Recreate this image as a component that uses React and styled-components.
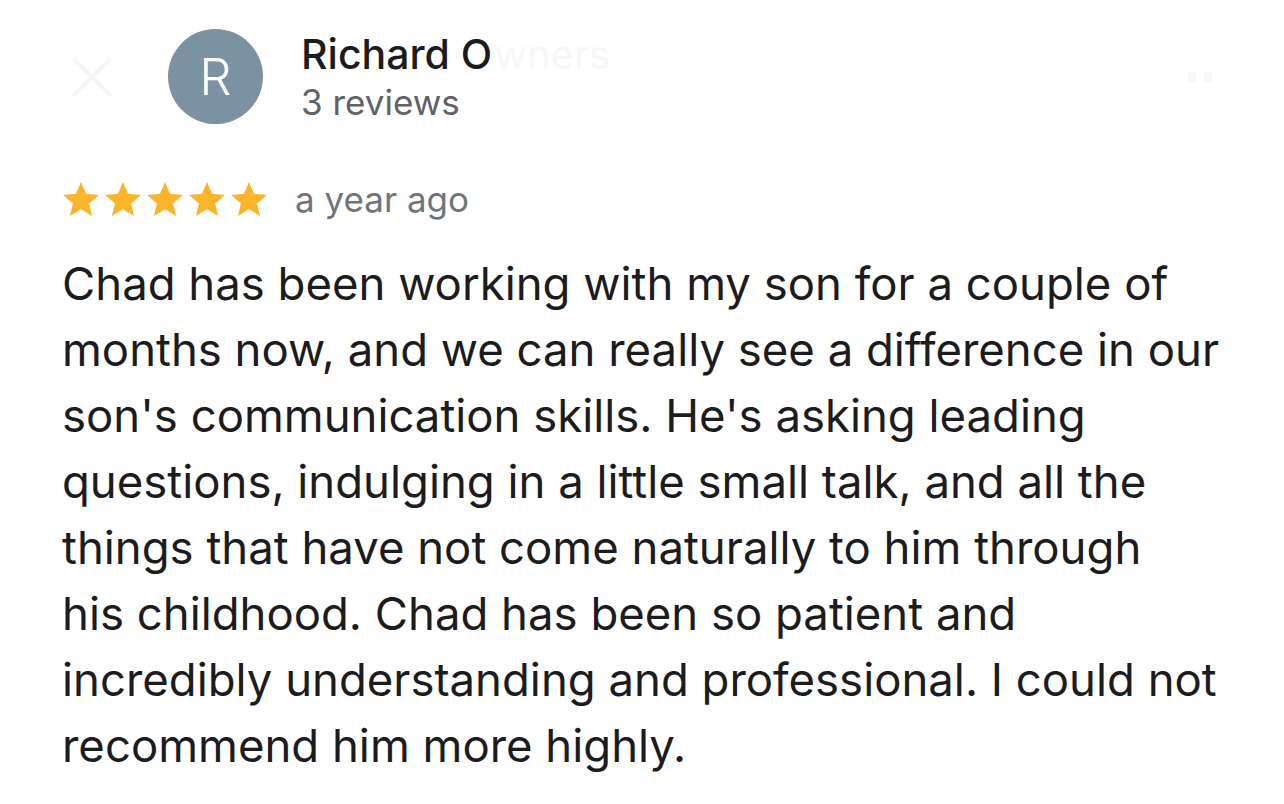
import React from 'react';
import styled, { createGlobalStyle } from 'styled-components';

const GlobalStyle = createGlobalStyle`
  html, body {
    margin: 0;
    padding: 0;
    background: #ffffff;
  }
  body {
    font-family: Inter, Roboto, 'Liberation Sans', Arial, sans-serif;
    color: #202124;
  }
`;

const Page = styled.div`
  width: 1284px;
  height: 804px;
  background: #ffffff;
  overflow: hidden;
`;

const Header = styled.div`
  display: flex;
  align-items: center;
  padding: 29px 0 0 68px;
  height: 95px;
`;

const GhostClose = styled.div`
  width: 48px;
  height: 48px;
  display: flex;
  align-items: center;
  justify-content: center;
  margin-right: 52px;
`;

const Avatar = styled.div`
  width: 95px;
  height: 95px;
  border-radius: 50%;
  background: #7a92a2;
  color: #ffffff;
  display: flex;
  align-items: center;
  justify-content: center;
  font-size: 51px;
  font-weight: 300;
  flex-shrink: 0;
`;

const Who = styled.div`
  display: flex;
  flex-direction: column;
  margin-left: 38px;
  margin-top: 0;
`;

const NameRow = styled.div`
  display: flex;
  align-items: baseline;
`;

const Name = styled.div`
  font-size: 41px;
  font-weight: 500;
  line-height: 50px;
  color: #1c1c1e;
`;

const GhostText = styled.span`
  font-size: 40px;
  color: #f7f7f7;
  margin-left: 2px;
`;

const Count = styled.div`
  font-size: 35px;
  line-height: 46px;
  color: #5f6368;
`;

const GhostMore = styled.div`
  margin-left: auto;
  margin-right: 72px;
  display: flex;
  gap: 8px;
`;

const Dot = styled.span`
  width: 8px;
  height: 10px;
  background: #f8f8f8;
`;

const RatingRow = styled.div`
  display: flex;
  align-items: center;
  padding: 54px 0 0 63px;
`;

const Stars = styled.div`
  display: flex;
  gap: 6px;
`;

const Ago = styled.span`
  font-size: 35px;
  color: #70757a;
  margin-left: 28px;
`;

const Body = styled.div`
  padding: 31px 0 0 62px;
  font-size: 45.5px;
  line-height: 66px;
  color: #1c1c1e;
`;

const Line = styled.div`
  white-space: nowrap;
`;

const Star = () => (
  <svg width="36" height="34" viewBox="2 2 20 19">
    <path
      fill="#fab52a"
      d="M12 17.27L18.18 21l-1.64-7.03L22 9.24l-7.19-.61L12 2 9.19 8.63 2 9.24l5.46 4.73L5.82 21z"
    />
  </svg>
);

const lines = [
  'Chad has been working with my son for a couple of',
  'months now, and we can really see a difference in our',
  "son's communication skills. He's asking leading",
  'questions, indulging in a little small talk, and all the',
  'things that have not come naturally to him through',
  'his childhood. Chad has been so patient and',
  'incredibly understanding and professional. I could not',
  'recommend him more highly.',
];

const App = () => {
  return (
    <Page>
      <GlobalStyle />
      <Header>
        <GhostClose>
          <svg width="46" height="46" viewBox="0 0 46 46">
            <path d="M4 4L42 42M42 4L4 42" stroke="#f5f5f5" strokeWidth="4" />
          </svg>
        </GhostClose>
        <Avatar>R</Avatar>
        <Who>
          <NameRow>
            <Name>Richard O</Name>
            <GhostText>wners</GhostText>
          </NameRow>
          <Count>3 reviews</Count>
        </Who>
        <GhostMore>
          <Dot />
          <Dot />
        </GhostMore>
      </Header>
      <RatingRow>
        <Stars>
          {[0, 1, 2, 3, 4].map((i) => (
            <Star key={i} />
          ))}
        </Stars>
        <Ago>a year ago</Ago>
      </RatingRow>
      <Body>
        {lines.map((l, i) => (
          <Line key={i}>{l}</Line>
        ))}
      </Body>
    </Page>
  );
};

export default App;
